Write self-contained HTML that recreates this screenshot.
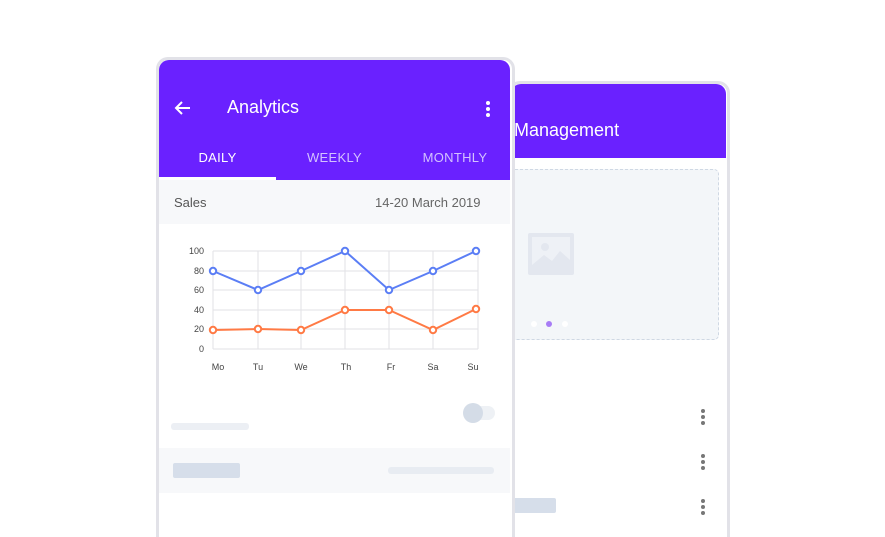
<!DOCTYPE html>
<html style="height:537px;overflow:hidden"><head><style>
html,body{margin:0;width:885px;height:537px;overflow:hidden}
body{background:#fff;position:relative;font-family:"Liberation Sans",Arial,sans-serif}
.a{position:absolute}
.dots3 span{display:block;width:4px;height:4px;border-radius:50%;background:#777;margin-bottom:2px}
</style></head><body>
<div class="a" style="left:508px;top:81px;width:216px;height:470px;border:3px solid #e2e2e8;border-bottom:none;border-radius:12px 12px 0 0;background:#fff;height:456px"></div>
<div class="a" style="left:511px;top:84px;width:215px;height:74px;background:#6a21ff;border-radius:10px 10px 0 0"></div>
<div class="a" style="left:514px;top:120px;color:#fff;font-size:18px">Management</div>
<div class="a" style="left:510px;top:169px;width:207px;height:169px;background:#f3f6f9;border:1px dashed #cfd8e4;border-radius:5px"></div>
<svg class="a" style="left:528px;top:233px" width="46" height="42"><rect x="0" y="0" width="46" height="42" rx="2" fill="#e3e7ef"/><rect x="4" y="4" width="38" height="34" fill="#eef1f6"/><circle cx="17" cy="14" r="4" fill="#e3e7ef"/><path d="M4 32 L16 22 L24 28 L32 18 L42 27 L42 38 L4 38Z" fill="#e3e7ef"/></svg>
<div class="a" style="left:531px;top:321px;width:6px;height:6px;border-radius:50%;background:#fff"></div>
<div class="a" style="left:546px;top:321px;width:6px;height:6px;border-radius:50%;background:#a77cf5"></div>
<div class="a" style="left:562px;top:321px;width:6px;height:6px;border-radius:50%;background:#fff"></div>
<div class="a dots3" style="left:701px;top:409px"><span></span><span></span><span></span></div>
<div class="a dots3" style="left:701px;top:454px"><span></span><span></span><span></span></div>
<div class="a dots3" style="left:701px;top:499px"><span></span><span></span><span></span></div>
<div class="a" style="left:510px;top:498px;width:46px;height:15px;background:#d6deea;border-radius:2px"></div>
<div class="a" style="left:156px;top:57px;width:353px;height:480px;border:3px solid #e2e2e8;border-bottom:none;border-radius:12px 12px 0 0;background:#fff"></div>
<div class="a" style="left:159px;top:60px;width:351px;height:120px;background:#6a21ff;border-radius:10px 10px 0 0"></div>
<svg class="a" style="left:174px;top:100px" width="18" height="16"><path d="M16 8H2M8 2L2 8l6 6" stroke="#fff" stroke-width="2" fill="none"/></svg>
<div class="a" style="left:227px;top:97px;color:#fff;font-size:18px">Analytics</div>
<div class="a" style="left:486px;top:101px"><div style="width:4px;height:4px;border-radius:50%;background:#fff;margin-bottom:2px"></div><div style="width:4px;height:4px;border-radius:50%;background:#fff;margin-bottom:2px"></div><div style="width:4px;height:4px;border-radius:50%;background:#fff"></div></div>
<div class="a" style="left:159px;top:150px;width:117px;text-align:center;color:#fff;font-size:13px;letter-spacing:.3px">DAILY</div>
<div class="a" style="left:276px;top:150px;width:117px;text-align:center;color:#d3c2ff;font-size:13px;letter-spacing:.3px">WEEKLY</div>
<div class="a" style="left:400px;top:150px;width:110px;text-align:center;color:#d3c2ff;font-size:13px;letter-spacing:.3px">MONTHLY</div>
<div class="a" style="left:159px;top:177px;width:117px;height:3px;background:#fff"></div>
<div class="a" style="left:159px;top:180px;width:351px;height:44px;background:#f7f8fa"></div>
<div class="a" style="left:174px;top:195px;color:#555;font-size:13px">Sales</div>
<div class="a" style="left:375px;top:195px;color:#666;font-size:13px">14-20 March 2019</div>
<svg class="a" style="left:0;top:0" width="885" height="537" font-family="Liberation Sans,sans-serif" font-size="9" fill="#444">
<g stroke="#e2e2e6" stroke-width="1">
<line x1="213" y1="251" x2="478" y2="251"/><line x1="213" y1="271" x2="478" y2="271"/><line x1="213" y1="290" x2="478" y2="290"/><line x1="213" y1="310" x2="478" y2="310"/><line x1="213" y1="329" x2="478" y2="329"/><line x1="213" y1="349" x2="478" y2="349"/>
<line x1="213" y1="251" x2="213" y2="349"/><line x1="258" y1="251" x2="258" y2="349"/><line x1="301" y1="251" x2="301" y2="349"/><line x1="345" y1="251" x2="345" y2="349"/><line x1="389" y1="251" x2="389" y2="349"/><line x1="433" y1="251" x2="433" y2="349"/><line x1="478" y1="251" x2="478" y2="349"/>
</g>
<g text-anchor="end"><text x="204" y="254">100</text><text x="204" y="274">80</text><text x="204" y="293">60</text><text x="204" y="313">40</text><text x="204" y="332">20</text><text x="204" y="352">0</text></g>
<g text-anchor="middle"><text x="218" y="370">Mo</text><text x="258" y="370">Tu</text><text x="301" y="370">We</text><text x="346" y="370">Th</text><text x="391" y="370">Fr</text><text x="433" y="370">Sa</text><text x="473" y="370">Su</text></g>
<polyline points="213,271 258,290 301,271 345,251 389,290 433,271 476,251" fill="none" stroke="#5b7ef5" stroke-width="2"/>
<polyline points="213,330 258,329 301,330 345,310 389,310 433,330 476,309" fill="none" stroke="#ff7a45" stroke-width="2"/>
<g fill="#fff" stroke="#5b7ef5" stroke-width="2"><circle cx="213" cy="271" r="3.2"/><circle cx="258" cy="290" r="3.2"/><circle cx="301" cy="271" r="3.2"/><circle cx="345" cy="251" r="3.2"/><circle cx="389" cy="290" r="3.2"/><circle cx="433" cy="271" r="3.2"/><circle cx="476" cy="251" r="3.2"/></g>
<g fill="#fff" stroke="#ff7a45" stroke-width="2"><circle cx="213" cy="330" r="3.2"/><circle cx="258" cy="329" r="3.2"/><circle cx="301" cy="330" r="3.2"/><circle cx="345" cy="310" r="3.2"/><circle cx="389" cy="310" r="3.2"/><circle cx="433" cy="330" r="3.2"/><circle cx="476" cy="309" r="3.2"/></g>
</svg>
<div class="a" style="left:470px;top:406px;width:25px;height:14px;border-radius:7px;background:#eef1f5"></div>
<div class="a" style="left:463px;top:403px;width:20px;height:20px;border-radius:50%;background:#d4dce7"></div>
<div class="a" style="left:171px;top:423px;width:78px;height:7px;border-radius:3px;background:#eceff4"></div>
<div class="a" style="left:159px;top:448px;width:351px;height:45px;background:#f7f8fa"></div>
<div class="a" style="left:173px;top:463px;width:67px;height:15px;border-radius:2px;background:#d6deea"></div>
<div class="a" style="left:388px;top:467px;width:106px;height:7px;border-radius:3px;background:#e8ecf2"></div>
</body></html>
